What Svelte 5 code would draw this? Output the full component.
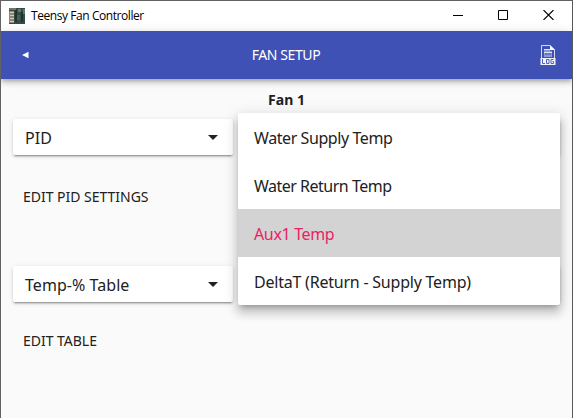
<script>
  const options = [
    { label: 'Water Supply Temp', tracking: -0.42 },
    { label: 'Water Return Temp', tracking: -0.5 },
    { label: 'Aux1 Temp', tracking: -0.35 },
    { label: 'DeltaT (Return - Supply Temp)', tracking: -0.22 }
  ];
  const rows = [
    { mode: 'PID', action: 'EDIT PID SETTINGS' },
    { mode: 'Temp-% Table', action: 'EDIT TABLE' }
  ];
  let selected = $state(2);
</script>

<div class="window">
  <div class="titlebar">
    <svg class="appicon" width="16" height="16" viewBox="0 0 16 16">
      <rect width="16" height="16" fill="#354b48" />
      <path d="M0 0h7v2H0z" fill="#747466" />
      <path d="M0 3h5v12H0z" fill="#8d8577" />
      <path d="M1 4h4v1H1zM1 7h4v1H1zM1 10h4v1H1zM1 13h4v1H1z" fill="#d6c9b6" />
      <path d="M6 2h2v12H6zM12 4h2v10h-2z" fill="#20332f" />
      <path d="M9 1h3v3H9zM14 1h2v5h-2z" fill="#607a72" />
      <path d="M8 7h3v5H8z" fill="#456057" />
    </svg>
    <span class="apptitle">Teensy Fan Controller</span>
    <div class="controls">
      <svg width="10" height="10" viewBox="0 0 10 10" shape-rendering="crispEdges"><path d="M0 5h10v1H0z" /></svg>
      <svg width="10" height="10" viewBox="0 0 10 10"><path d="M.5.5h9v9h-9z" fill="none" stroke="#000" /></svg>
      <svg width="11" height="10" viewBox="0 0 11 10"><path d="M.5 0l10 10M10.500 0L.5 10" fill="none" stroke="#000" stroke-width="1.1" /></svg>
    </div>
  </div>

  <header>
    <button class="back" aria-label="Back">
      <svg width="7" height="8" viewBox="0 0 7 8"><path d="M0 4L6.500 .7v6.600z" fill="#fff" /></svg>
    </button>
    <span class="heading">FAN SETUP</span>
    <svg class="log" width="16" height="20" viewBox="0 0 16 20">
      <path d="M1.500 13V.5H10L14.500 5V13" fill="none" stroke="#d5d9f0" />
      <path d="M10 0l5 5h-5z" fill="#fff" />
      <path d="M4 4h6v2h2v6H4z" fill="#8f99d6" />
      <path d="M4 4.500h6M4 7.500h8" stroke="#dfe2f4" />
      <path d="M5 9h6" stroke="#4454b6" />
      <path d="M.5 13h15v7H.5z" fill="#f0f1fa" />
      <path d="M2.500 14v4.500H5M6.500 14.500h2.500v4h-2.500zM13.500 14.500h-2.500v4h2.500v-2h-1" fill="none" stroke="#5361bc" />
    </svg>
  </header>

  <main>
    <h1>Fan 1</h1>
    {#each rows as row}
      <section>
        <div class="selects">
          <div class="select">
            <span>{row.mode}</span>
            <svg width="10" height="5" viewBox="0 0 10 5"><path d="M0 0h10L5 5z" fill="#212121" /></svg>
          </div>
          <div class="select source"></div>
        </div>
        <button class="action">{row.action}</button>
      </section>
    {/each}
  </main>

  <ul class="menu">
    {#each options as option, i}
      <li class:active={i === selected}>
        <button style="letter-spacing: {option.tracking}px" onclick={() => (selected = i)}>{option.label}</button>
      </li>
    {/each}
  </ul>
</div>

<style>
  .window {
    position: relative;
    box-sizing: border-box;
    width: 573px;
    height: 418px;
    overflow: hidden;
    display: flex;
    flex-direction: column;
    border: 1px solid #626262;
    border-right-color: #56595e;
    border-bottom: 0;
    background: #fafafa;
    color: #212121;
    font-family: Tahoma, 'Noto Sans', sans-serif;
    font-size: 16px;
  }
  button {
    padding: 0;
    border: 0;
    background: none;
    color: inherit;
    font: inherit;
    letter-spacing: inherit;
  }
  .titlebar {
    flex: none;
    display: flex;
    align-items: center;
    height: 30px;
    padding: 0 18px 0 8px;
    background: #fff;
    color: #000;
  }
  .apptitle {
    margin-left: 6px;
    font: 12px/16px 'Segoe UI', 'Open Sans', sans-serif;
    letter-spacing: -0.43px;
  }
  .controls {
    display: flex;
    gap: 35px;
    margin: 0 0 2px auto;
  }
  header {
    position: relative;
    flex: none;
    display: flex;
    align-items: center;
    justify-content: space-between;
    height: 48px;
    padding: 0 16px 0 21px;
    background: #3f51b5;
    color: #fff;
    font-size: 14px;
    box-shadow: 0 2px 4px -1px rgba(0, 0, 0, .2), 0 4px 5px rgba(0, 0, 0, .14), 0 1px 10px rgba(0, 0, 0, .12);
  }
  .back { display: flex; width: 10px; }
  .heading {
    padding-bottom: 1px;
    letter-spacing: -0.4px;
  }
  main { padding: 12px; }
  h1 {
    margin: 0 0 10px;
    height: 18px;
    font-size: 14px;
    line-height: 18px;
    text-align: center;
  }
  section { height: 147px; }
  .selects {
    display: flex;
    gap: 8px;
  }
  .select {
    box-sizing: border-box;
    flex: none;
    display: flex;
    align-items: center;
    justify-content: space-between;
    width: 220px;
    height: 36px;
    padding: 0 15px 0 12px;
    border-radius: 2px;
    background: #fff;
    box-shadow: 0 3px 1px -2px rgba(0, 0, 0, .2), 0 2px 2px rgba(0, 0, 0, .14), 0 1px 5px rgba(0, 0, 0, .12);
  }
  .select span {
    padding-top: 1px;
    letter-spacing: 0.05px;
  }
  .source { width: 319px; }
  .action {
    display: block;
    margin: 33px 0 0 10px;
    height: 18px;
    font-size: 14px;
    line-height: 18px;
    letter-spacing: -0.02px;
  }
  section:last-child .action { margin-top: 30px; }
  .menu {
    position: absolute;
    left: 237px;
    top: 112px;
    width: 322px;
    margin: 0;
    padding: 0;
    overflow: hidden;
    list-style: none;
    border-radius: 2px;
    background: #fff;
    box-shadow: 0 5px 5px -3px rgba(0, 0, 0, .2), 0 8px 10px 1px rgba(0, 0, 0, .14), 0 3px 14px 2px rgba(0, 0, 0, .12);
  }
  .menu button {
    display: block;
    width: 100%;
    height: 48px;
    padding: 2px 16px 0;
    text-align: left;
  }
  .active {
    background: #d3d3d3;
    color: #e91e63;
  }
</style>
